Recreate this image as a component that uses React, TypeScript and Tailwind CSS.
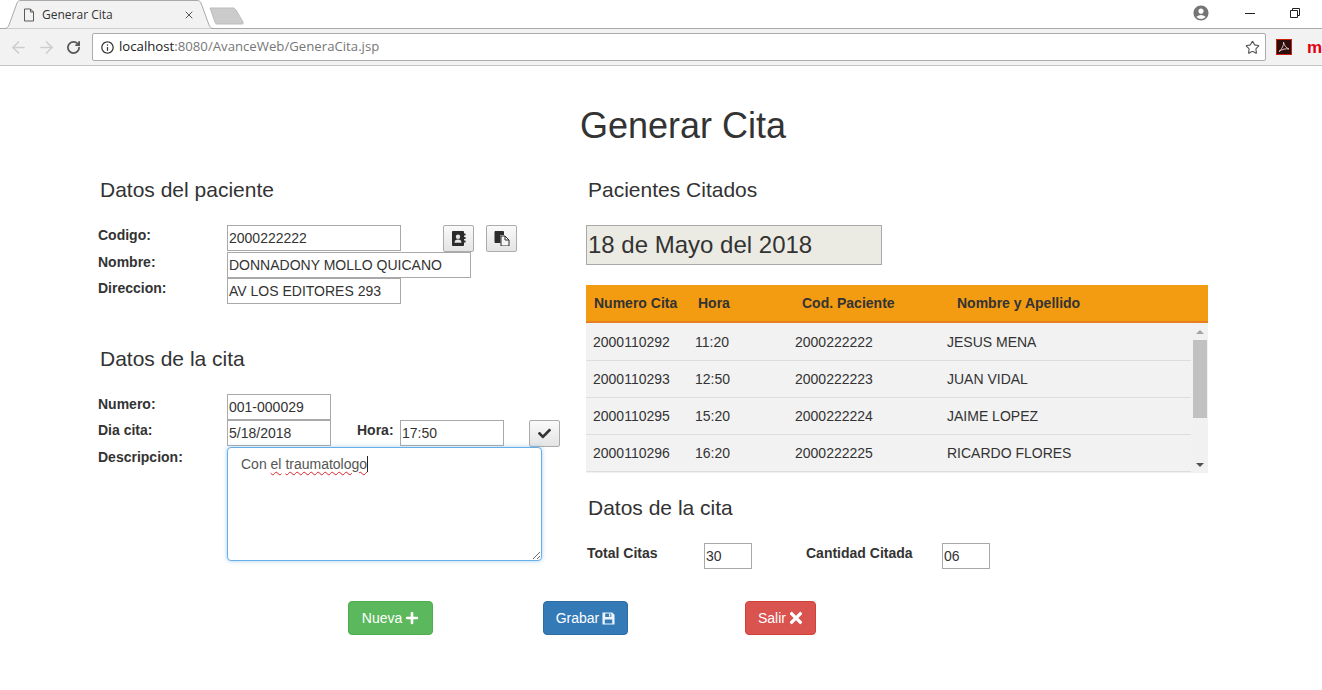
import { ArrowLeft, ArrowRight, RotateCw, Star, X } from 'lucide-react'
import { FaCheck, FaPlus, FaTimes } from 'react-icons/fa'
import { MdAccountCircle, MdInfoOutline } from 'react-icons/md'
import type { ReactNode } from 'react'

const citas = [
  ['2000110292', '11:20', '2000222222', 'JESUS MENA'],
  ['2000110293', '12:50', '2000222223', 'JUAN VIDAL'],
  ['2000110295', '15:20', '2000222224', 'JAIME LOPEZ'],
  ['2000110296', '16:20', '2000222225', 'RICARDO FLORES'],
]

function BrowserBar() {
  return (
    <header className="h-[66px] bg-white font-['Open_Sans',sans-serif] overflow-hidden">
      <div className="h-[29px] flex relative">
        <div className="absolute left-0 right-0 bottom-0 h-px bg-[#a9a9a9]" />
        <div className="relative w-[209px] ml-[4px] h-[29px] flex items-center pl-[19px] text-[12px] text-[#333]">
          <svg className="absolute left-0 top-0" width="209" height="29" viewBox="0 0 209 29">
            <path d="M0.5 28.5 H1 C3 28.5 4 27 5 25 L13 3 C14 1 15 0.5 17 0.5 H193 C195 0.5 196 1 197 3 L205 25 C206 27 207 28.5 209 28.5" fill="#f2f2f2" stroke="#a9a9a9" />
          </svg>
          <svg className="relative" width="12" height="14" viewBox="0 0 12 14" fill="none" stroke="#5a5a5a">
            <path d="M1.5 1 H7.5 L10.5 4 V13 H1.5 Z M7.5 1 V4 H10.5" />
          </svg>
          <span className="relative ml-[7px] leading-none">Generar Cita</span>
          <X className="absolute left-[179px] top-[9px]" size={12} strokeWidth={2} color="#555" />
        </div>
        <svg className="mt-[7px] -ml-[4px]" width="36" height="18" viewBox="0 0 36 18">
          <path d="M1 1 H24 C25 1 26 1.500 27 3 L34 15 C34.500 16.500 34 17 33 17 H8 C7 17 6.500 16.500 6 15 Z" fill="#cbcbcb" stroke="#bdbdbd" />
        </svg>
        <div className="ml-auto flex items-center h-[26px] text-[#5f6368]">
          <MdAccountCircle size={18} color="#757575" />
          <svg className="ml-[35px]" width="10" height="10" viewBox="0 0 10 10" stroke="#222">
            <path d="M0 5.500 H10" />
          </svg>
          <svg className="ml-[35px] mr-[22px]" width="10" height="10" viewBox="0 0 10 10" fill="none" stroke="#222">
            <path d="M0.500 2.500 H7.500 V9.500 H0.500 Z M2.500 2.500 V0.500 H9.500 V7.500 H7.500" />
          </svg>
        </div>
      </div>
      <div className="h-[37px] bg-[#f2f2f2] border-b border-[#c4c4c4] flex items-center">
        <ArrowLeft className="ml-[9px]" size={19} strokeWidth={2} color="#cdcdcd" />
        <ArrowRight className="ml-[9px]" size={19} strokeWidth={2} color="#cdcdcd" />
        <RotateCw className="ml-[10px]" size={15} strokeWidth={2.8} color="#555" />
        <div className="ml-[11px] w-[1174px] h-[28px] bg-white border border-[#ababab] rounded-[2px] flex items-center pl-[7px] pr-[5px]">
          <MdInfoOutline size={15} color="#333" />
          <span className="ml-[4px] text-[13.2px] text-[#777] leading-none whitespace-nowrap">
            <span className="text-[#222]">localhost</span>:8080/AvanceWeb/GeneraCita.jsp
          </span>
          <Star className="ml-auto" size={15} strokeWidth={1.8} color="#555" />
        </div>
        <svg className="ml-[10px] shrink-0" width="16" height="16" viewBox="0 0 16 16">
          <rect x="0.500" y="0.500" width="15" height="15" fill="#2a0f0d" stroke="#c8200f" />
          <path d="M3 12.500 C6 10 8 6 7.500 3 C8 6 10 9 13 10 C10 9.500 6 10 3 12.500 Z" fill="none" stroke="#e0c8c4" strokeWidth="1" />
        </svg>
        <span className="ml-[15px] text-[17px] font-bold text-[#e3000f] leading-none font-['Liberation_Sans',sans-serif]">m</span>
      </div>
    </header>
  )
}

function AddressBookIcon() {
  return (
    <svg width="15" height="15" viewBox="0 0 15 15">
      <path d="M1 1 C1 0.500 1.500 0 2 0 H12 C12.500 0 13 0.500 13 1 V14 C13 14.500 12.500 15 12 15 H2 C1.500 15 1 14.500 1 14 Z" fill="#2b2b2b" />
      <path d="M13 2.500 H14.500 V4.500 H13 Z M13 6 H14.500 V8 H13 Z M13 9.500 H14.500 V11.500 H13 Z" fill="#2b2b2b" />
      <circle cx="7" cy="5.800" r="2.200" fill="#e6e6e6" />
      <path d="M3.500 11.800 C3.500 9.500 4.800 8.600 7 8.600 C9.200 8.600 10.500 9.500 10.500 11.800 Z" fill="#e6e6e6" />
    </svg>
  )
}

function PasteIcon() {
  return (
    <svg width="16" height="15" viewBox="0 0 16 15">
      <path d="M0.500 1 C0.500 0.500 1 0 1.500 0 H9 C9.500 0 10 0.500 10 1 V4 H6.500 V12 H1.500 C1 12 0.500 11.500 0.500 11 Z" fill="#2b2b2b" />
      <path d="M7 5 H11 L15 9 V15 H7 Z" fill="#f5f5f5" stroke="#2b2b2b" strokeWidth="1" />
      <path d="M11 5 V9 H15" fill="none" stroke="#2b2b2b" strokeWidth="1" />
    </svg>
  )
}

function SaveIcon() {
  return (
    <svg width="13" height="13" viewBox="0 0 14 14">
      <path fillRule="evenodd" d="M0.500 0.500 H11 L13.500 3 V13.500 H0.500 Z M3.500 1.500 V5.500 H10 V1.500 Z M3 8 V12.500 H11 V8 Z M7.500 2 H9 V5 H7.500 Z" fill="#eef4fa" />
    </svg>
  )
}

function Field({ value, className }: { value: string; className: string }) {
  return (
    <div className={`h-[26px] bg-white border border-[#a9a9a9] px-px leading-[24px] whitespace-nowrap ${className}`}>
      {value}
    </div>
  )
}

function Row({ label, children }: { label: string; children: ReactNode }) {
  return (
    <div className="flex items-start">
      <label className="w-[129px] font-bold leading-5">{label}</label>
      {children}
    </div>
  )
}

function IconButton({ children, className }: { children: ReactNode; className: string }) {
  return (
    <button className={`w-[31px] h-[27px] border border-[#ababab] rounded-[2px] bg-gradient-to-b from-[#fafafa] to-[#e4e4e4] flex items-center justify-center text-[#333] ${className}`}>
      {children}
    </button>
  )
}

function Heading({ children }: { children: ReactNode }) {
  return <h3 className="text-[21px] leading-[22px] mb-6 ml-[2px]">{children}</h3>
}

function Scrollbar() {
  return (
    <div className="w-[17px] shrink-0 flex flex-col items-center bg-[#f1f1f1]">
      <div className="mt-[7px] w-0 h-0 border-x-[4px] border-x-transparent border-b-[4px] border-b-[#a3a3a3]" />
      <div className="mt-[6px] w-[14px] h-[78px] bg-[#c1c1c1]" />
      <div className="mt-auto mb-[6px] w-0 h-0 border-x-[4px] border-x-transparent border-t-[4px] border-t-[#505050]" />
    </div>
  )
}

function ActionButton({ children, className }: { children: ReactNode; className: string }) {
  return (
    <button className={`h-[34px] rounded-[4px] border text-white flex items-center justify-center gap-[3px] ${className}`}>
      {children}
    </button>
  )
}

export default function App() {
  return (
    <div className="h-[690px] overflow-hidden bg-white text-[14px] text-[#333] font-['Liberation_Sans',sans-serif]">
      <BrowserBar />
      <main className="ml-[98px] w-[1170px] pt-[40px]">
        <h1 className="text-[36px] leading-[40px] text-center">Generar Cita</h1>

        <div className="flex mt-[33px]">
          <section className="w-[488px]">
            <Heading>Datos del paciente</Heading>
            <Row label="Codigo:">
              <Field value="2000222222" className="w-[174px]" />
              <IconButton className="ml-[42px]">
                <AddressBookIcon />
              </IconButton>
              <IconButton className="ml-[12px]">
                <PasteIcon />
              </IconButton>
            </Row>
            <Row label="Nombre:">
              <Field value="DONNADONY MOLLO QUICANO" className="w-[244px]" />
            </Row>
            <Row label="Direccion:">
              <Field value="AV LOS EDITORES 293" className="w-[174px]" />
            </Row>

            <div className="mt-[44px]">
              <Heading>Datos de la cita</Heading>
            </div>
            <Row label="Numero:">
              <Field value="001-000029" className="w-[104px]" />
            </Row>
            <Row label="Dia cita:">
              <Field value="5/18/2018" className="w-[104px]" />
              <label className="ml-[26px] w-[43px] font-bold leading-5">Hora:</label>
              <Field value="17:50" className="w-[104px]" />
              <IconButton className="ml-[25px]">
                <FaCheck size={13} />
              </IconButton>
            </Row>
            <Row label="Descripcion:">
              <div className="w-[315px] h-[114px] bg-white border border-[#66afe9] rounded-[4px] shadow-[0_0_4px_rgba(102,175,233,0.6)] px-[13px] py-[6px] leading-5 overflow-auto resize text-[#555]">
                Con{' '}
                <span className="underline decoration-wavy decoration-[#e0202a] decoration-1 underline-offset-2">el</span>{' '}
                <span className="underline decoration-wavy decoration-[#e0202a] decoration-1 underline-offset-2 border-r border-[#222]">traumatologo</span>
              </div>
            </Row>
          </section>

          <section className="w-[622px]">
            <Heading>Pacientes Citados</Heading>
            <div className="w-[296px] h-[40px] bg-[#ebebe4] border border-[#a9a9a9] text-[24px] leading-[38px] px-px">
              18 de Mayo del 2018
            </div>

            <div className="mt-5">
              <div className="h-[38px] bg-[#f39c12] border-b-2 border-[#e67e22] flex items-center pl-2 font-bold">
                <span className="w-[104px]">Numero Cita</span>
                <span className="w-[104px]">Hora</span>
                <span className="w-[155px]">Cod. Paciente</span>
                <span>Nombre y Apellido</span>
              </div>
              <div className="h-[150px] flex bg-[#f2f2f2]">
                <div className="flex-1 pt-px">
                  {citas.map((c) => (
                    <div key={c[0]} className="h-[37px] border-b border-[#dddddd] flex items-center pl-[7px]">
                      <span className="w-[102px]">{c[0]}</span>
                      <span className="w-[100px]">{c[1]}</span>
                      <span className="w-[152px]">{c[2]}</span>
                      <span>{c[3]}</span>
                    </div>
                  ))}
                </div>
                <Scrollbar />
              </div>
            </div>

            <div className="mt-[24px]">
              <Heading>Datos de la cita</Heading>
            </div>
            <div className="flex items-start">
              <label className="w-[117px] ml-px font-bold leading-5">Total Citas</label>
              <Field value="30" className="w-[48px]" />
              <label className="ml-[54px] w-[136px] font-bold leading-5">Cantidad Citada</label>
              <Field value="06" className="w-[48px]" />
            </div>
          </section>
        </div>

        <div className="flex mt-[32px] ml-[250px]">
          <ActionButton className="w-[85px] bg-[#5cb85c] border-[#4cae4c]">
            Nueva <FaPlus size={14} />
          </ActionButton>
          <ActionButton className="w-[85px] ml-[110px] bg-[#337ab7] border-[#2e6da4]">
            Grabar <SaveIcon />
          </ActionButton>
          <ActionButton className="w-[71px] ml-[117px] bg-[#d9534f] border-[#d43f3a]">
            Salir <FaTimes size={18} className="-mx-[2px]" />
          </ActionButton>
        </div>
      </main>
    </div>
  )
}
